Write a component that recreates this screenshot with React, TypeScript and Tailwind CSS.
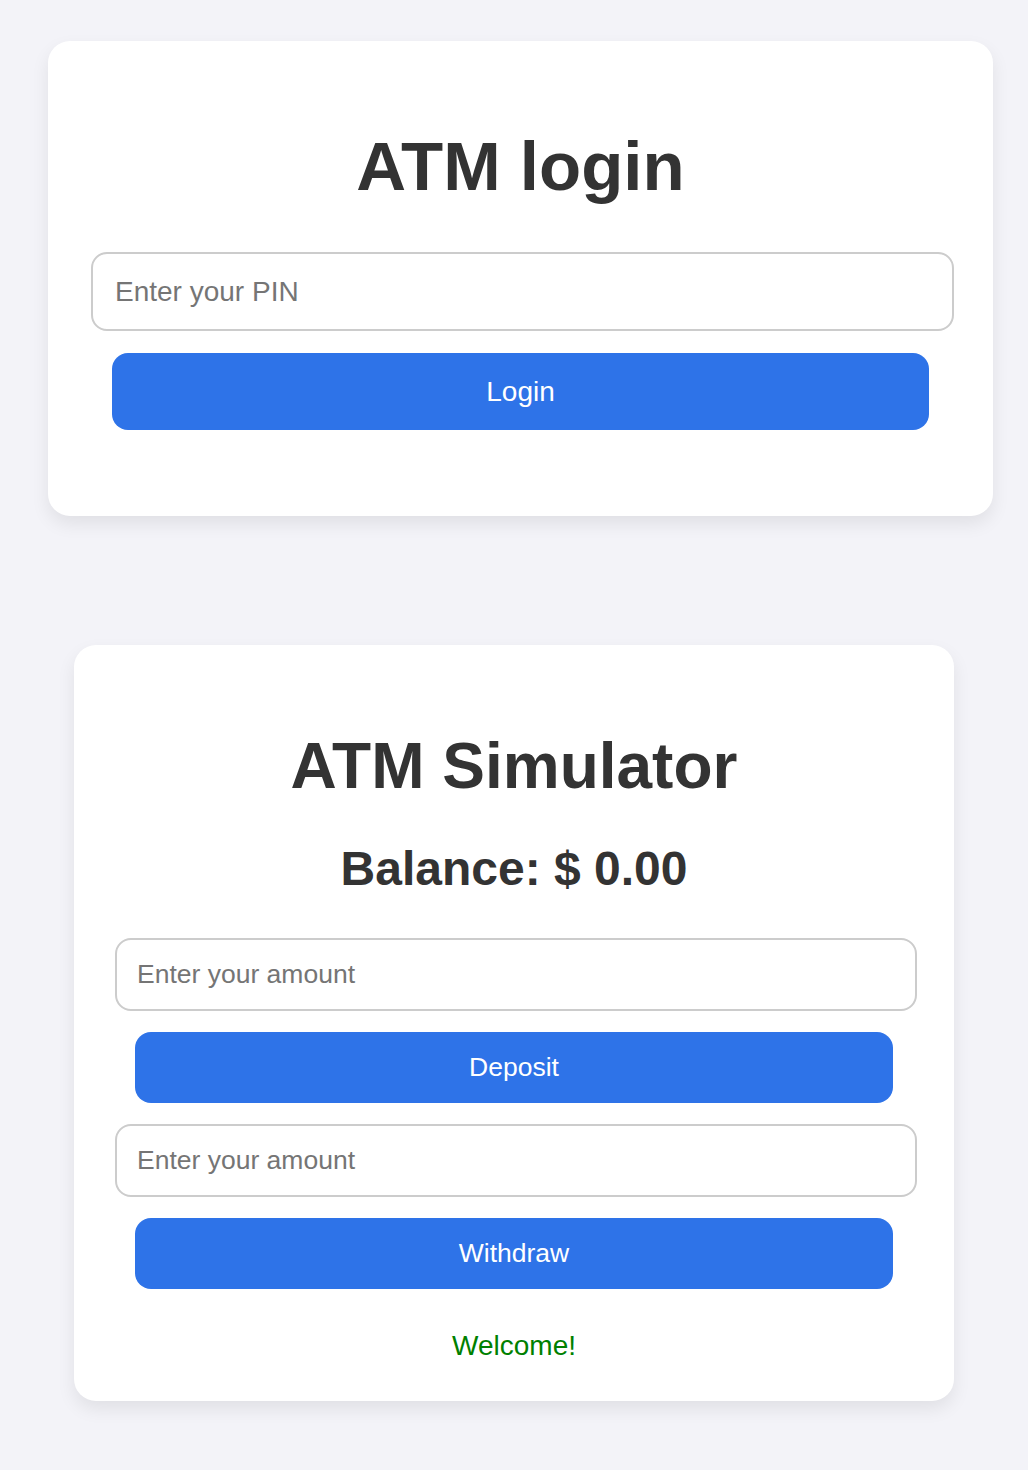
import React from "react";

const font = { fontFamily: '"Liberation Sans", Arial, Helvetica, sans-serif' };

export default function App() {
  return (
    <div
      className="min-h-[1470px] w-[1028px] bg-[#f3f3f8] pt-[41px] pb-[69px] flex flex-col"
      style={font}
    >
      {/* Login card */}
      <div className="ml-[48px] w-[945px] h-[475px] bg-white rounded-[22px] shadow-[0_8px_18px_rgba(0,0,0,0.08)] flex flex-col">
        <h1 className="mt-[87px] text-center text-[69px] leading-[78px] font-bold text-[#333333]">
          ATM login
        </h1>
        <input
          type="password"
          placeholder="Enter your PIN"
          className="mt-[46px] ml-[43px] w-[863px] h-[79px] border-2 border-[#cccccc] rounded-[16px] px-[22px] text-[28px] text-[#333] placeholder:text-[#757575] outline-none"
        />
        <button className="mt-[22px] ml-[64px] w-[817px] h-[77px] rounded-[16px] bg-[#2e73e8] text-white text-[28px]">
          Login
        </button>
      </div>

      {/* Simulator card */}
      <div className="mt-[129px] ml-[74px] w-[880px] h-[756px] bg-white rounded-[22px] shadow-[0_8px_18px_rgba(0,0,0,0.08)] flex flex-col">
        <h1 className="mt-[84px] text-center text-[64px] leading-[74px] font-bold text-[#333333]">
          ATM Simulator
        </h1>
        <h2 className="mt-[38px] text-center text-[48px] leading-[55px] font-bold text-[#333333]">
          Balance: $ 0.00
        </h2>
        <input
          type="number"
          placeholder="Enter your amount"
          className="mt-[42px] ml-[41px] w-[802px] h-[73px] border-2 border-[#cccccc] rounded-[16px] px-[20px] text-[26.5px] text-[#333] placeholder:text-[#757575] outline-none"
        />
        <button className="mt-[21px] ml-[61px] w-[758px] h-[71px] rounded-[16px] bg-[#2e73e8] text-white text-[26.5px]">
          Deposit
        </button>
        <input
          type="number"
          placeholder="Enter your amount"
          className="mt-[21px] ml-[41px] w-[802px] h-[73px] border-2 border-[#cccccc] rounded-[16px] px-[20px] text-[26.5px] text-[#333] placeholder:text-[#757575] outline-none"
        />
        <button className="mt-[21px] ml-[61px] w-[758px] h-[71px] rounded-[16px] bg-[#2e73e8] text-white text-[26.5px]">
          Withdraw
        </button>
        <p className="mt-[41px] text-center text-[28px] leading-[32px] text-[#008000]">
          Welcome!
        </p>
      </div>
    </div>
  );
}
